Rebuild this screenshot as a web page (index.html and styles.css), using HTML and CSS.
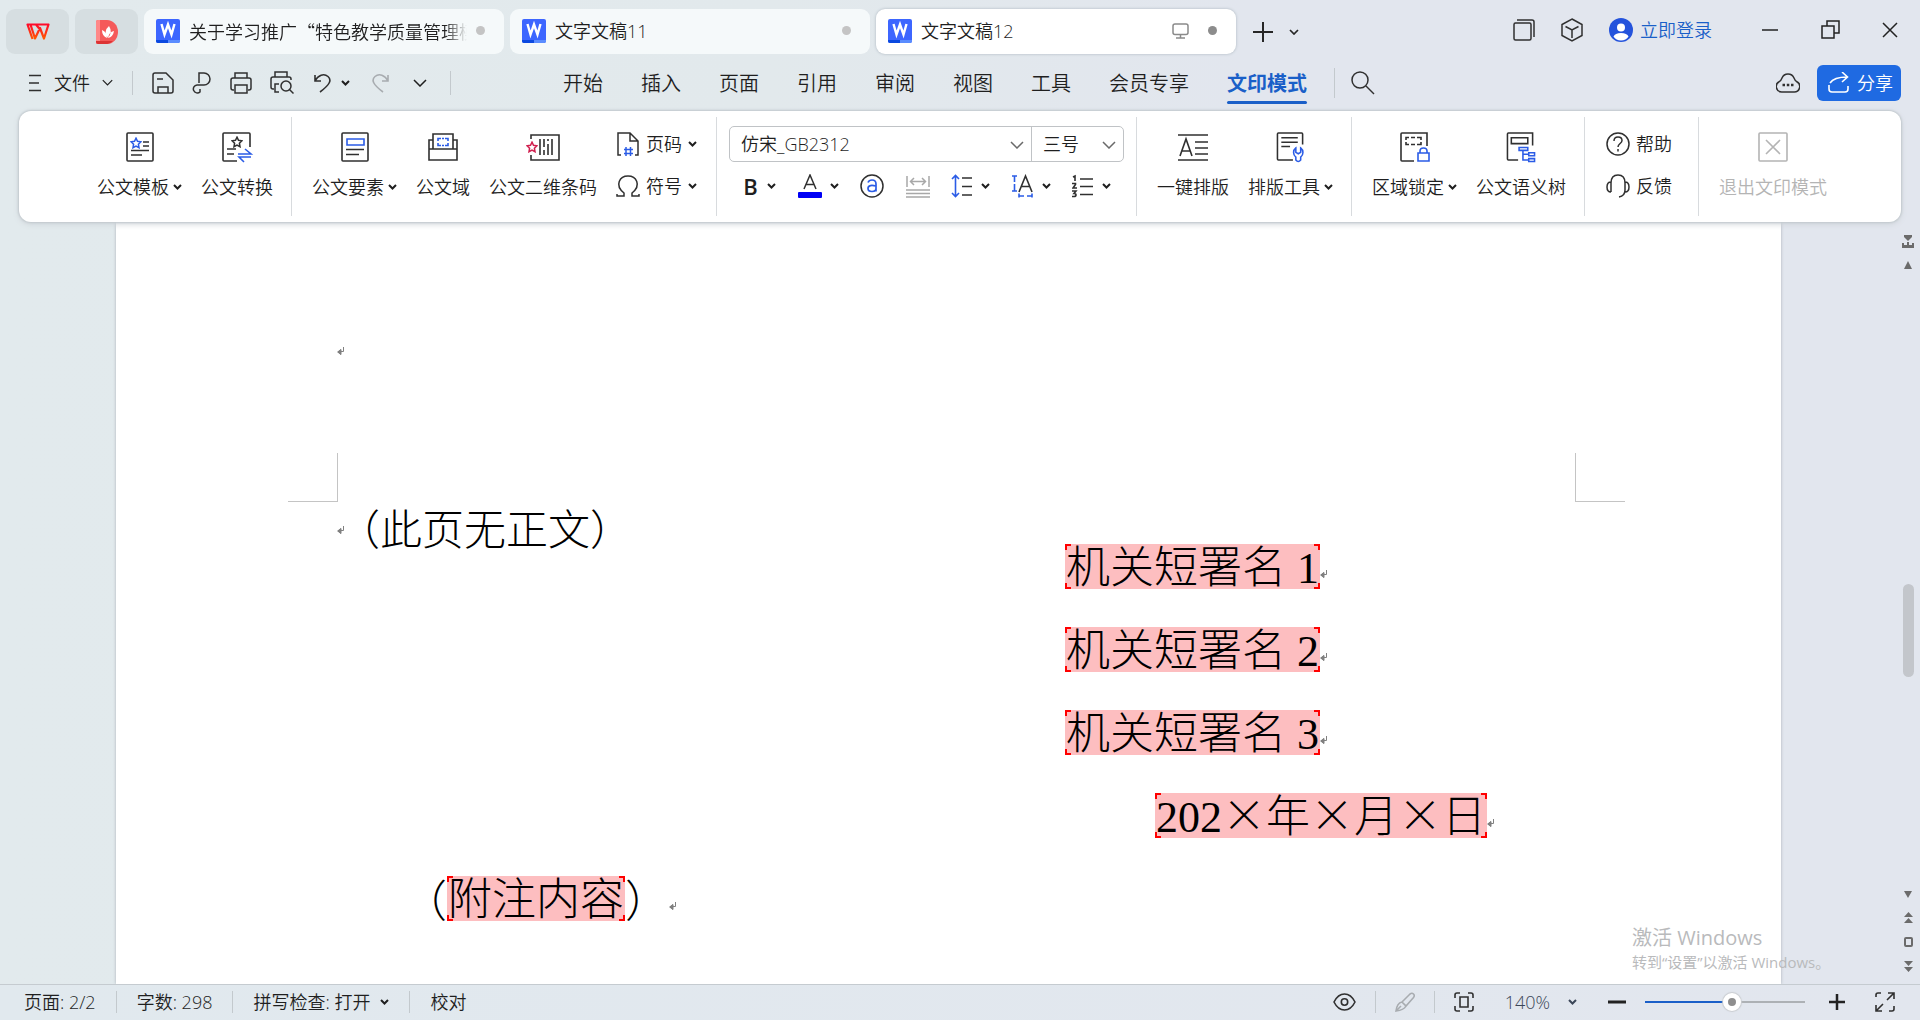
FILE: index.html
```html
<!DOCTYPE html>
<html lang="zh-CN">
<head>
<meta charset="utf-8">
<title>文字文稿12</title>
<link rel="stylesheet" href="styles.css">
</head>
<body>
<svg class="defs" aria-hidden="true">
  <symbol id="caret" viewBox="0 0 9 6"><path d="M1 1l3.500 3.500L8 1" fill="none" stroke="currentColor" stroke-width="2"/></symbol>
  <symbol id="chev" viewBox="0 0 14 8"><path d="M1 1l6 6 6-6" fill="none" stroke="currentColor" stroke-width="1.500"/></symbol>
  <symbol id="word" viewBox="0 0 24 24"><rect width="24" height="24" rx="2" fill="#3d66ff"/><path d="M0 21h12v3H2a2 2 0 0 1-2-2z" fill="#0b49e0"/><path d="M12 21h12v1a2 2 0 0 1-2 2H12z" fill="#5a8cff"/><path d="M5.500 5l3 10.500L12 5.500l3.500 10L18.500 5" fill="none" stroke="#fff" stroke-width="2.400"/></symbol>
  <symbol id="ret" viewBox="0 0 7 9"><path d="M6.500 0v4.500H3M4 2.500L1 5l3 2.500z" fill="none" stroke="#808080"/><path d="M4 2v6L0 5z" fill="#808080"/></symbol>
  <symbol id="star" viewBox="0 0 12 12"><path d="M6 1.200l1.500 3.100 3.400.5-2.500 2.400.6 3.500L6 9l-3 1.700.6-3.500L1.100 4.800l3.400-.5z" fill="none" stroke="currentColor" stroke-width="1.500"/></symbol>
</svg>

<header class="titlebar">
  <button class="home-tab" aria-label="首页"><svg width="24" height="20" viewBox="0 0 24 20"><defs><linearGradient id="wps" x2="0" y2="1"><stop stop-color="#ff0a2b"/><stop offset="1" stop-color="#ff5a00"/></linearGradient></defs><path d="M4.500 2.500L9 16.500 14 6l4 10.500 4.500-14H10l4 5M10 2.500H1.500L6.500 17" fill="none" stroke="url(#wps)" stroke-width="2.200" stroke-linejoin="round"/></svg></button>
  <button class="home-tab" aria-label="稻壳"><svg width="22" height="24" viewBox="0 0 22 24"><path d="M0 2a2 2 0 0 1 2-2h9a11 12 0 0 1 0 24H2a2 2 0 0 1-2-2z" fill="#f55a5a"/><path d="M0 2a2 2 0 0 1 2-2h2v24H2a2 2 0 0 1-2-2z" fill="#f88"/><path d="M0 21h17q-3 3-6 3H2a2 2 0 0 1-2-2z" fill="#dc3434"/><path d="M12 18q-5-7 1-12 4 6-1 12M11 18Q6 16 6 10q5 2 5 8M12 18q5-1 6-7-5 1-6 7" fill="#fff"/></svg></button>
  <button class="doc-tab"><svg width="24" height="24"><use href="#word"/></svg><span class="tab-name fade">关于学习推广“特色教学质量管理模</span><i class="dot"></i></button>
  <button class="doc-tab"><svg width="24" height="24"><use href="#word"/></svg><span class="tab-name">文字文稿11</span><i class="dot"></i></button>
  <button class="doc-tab active"><svg width="24" height="24"><use href="#word"/></svg><span class="tab-name">文字文稿12</span><svg width="17" height="16" viewBox="0 0 17 16" fill="none" stroke="#8a8a8a" stroke-width="1.500"><rect x="1" y="1" width="15" height="10.500" rx="2"/><path d="M8.500 12v2.500M4 15h9"/></svg><i class="dot"></i></button>
  <button class="new-tab" aria-label="新建"><svg width="22" height="22" viewBox="0 0 22 22"><path d="M11 1v20M1 11h20" stroke="#262626" stroke-width="2"/></svg></button>
  <button class="tab-list" aria-label="标签列表"><svg width="10" height="6" viewBox="0 0 10 6"><path d="M1 1l4 4 4-4" fill="none" stroke="#262626" stroke-width="1.700"/></svg></button>
  <nav class="window-tools">
    <button aria-label="窗口"><svg width="22" height="22" viewBox="0 0 22 22" fill="none" stroke="#303030" stroke-width="1.500"><rect x="1" y="4" width="17" height="17" rx="1.500"/><path d="M4 1h15a2 2 0 0 1 2 2v15"/></svg></button>
    <button aria-label="应用"><svg width="22" height="24" viewBox="0 0 22 24" fill="none" stroke="#303030" stroke-width="1.500"><path d="M11 1l10 5.500v11L11 23 1 17.500v-11zM4.500 8.500L11 12l6.500-3.500M11 12v8"/></svg></button>
    <a class="login" href="#"><svg width="24" height="24" viewBox="0 0 24 24"><circle cx="12" cy="12" r="12" fill="#2453dc"/><circle cx="12" cy="9.500" r="4" fill="#fff"/><path d="M4.500 18.500Q6 15 12 15t7.500 3.500Q17 22.500 12 22.500t-7.500-4" fill="#fff"/></svg>立即登录</a>
    <button class="minimize" aria-label="最小化"><svg width="16" height="16" viewBox="0 0 16 16"><path d="M0 8h16" stroke="#222" stroke-width="1.500"/></svg></button>
    <button class="restore" aria-label="还原"><svg width="19" height="19" viewBox="0 0 19 19" fill="none" stroke="#222" stroke-width="1.500"><path d="M1 6h12v12H1zM6 6V1h12v12h-5"/></svg></button>
    <button aria-label="关闭"><svg width="16" height="16" viewBox="0 0 16 16"><path d="M1 1l14 14M15 1L1 15" stroke="#222" stroke-width="1.500"/></svg></button>
  </nav>
</header>

<div class="menubar">
  <button class="file-menu"><svg width="14" height="18" viewBox="0 0 14 18"><path d="M1 1.500h12M1 9h10M1 16.500h12" stroke="#303030" stroke-width="1.500"/></svg><span>文件</span><svg width="11" height="7"><use href="#chev"/></svg></button>
  <i class="rule"></i>
  <div class="quick">
    <button aria-label="保存"><svg width="22" height="22" viewBox="0 0 22 22" fill="none" stroke="#303030" stroke-width="1.500"><path d="M3 1h11l7 7v11a2 2 0 0 1-2 2H3a2 2 0 0 1-2-2V3a2 2 0 0 1 2-2zM6 21v-6h10v6M5 7h6"/></svg></button>
    <button aria-label="输出"><svg width="20" height="22" viewBox="0 0 20 22" fill="none" stroke="#303030" stroke-width="1.500"><path d="M7 11V1h5a6 6 0 0 1 0 12H5a4 4 0 1 0 3 7v-3"/></svg></button>
    <button aria-label="打印"><svg width="22" height="22" viewBox="0 0 22 22" fill="none" stroke="#303030" stroke-width="1.500"><path d="M5 6V1h12v5M4 18H3a2 2 0 0 1-2-2V8a2 2 0 0 1 2-2h16a2 2 0 0 1 2 2v8a2 2 0 0 1-2 2h-1M5 13h12v8H5z"/></svg></button>
    <button aria-label="打印预览"><svg width="24" height="23" viewBox="0 0 24 23" fill="none" stroke="#303030" stroke-width="1.500"><path d="M5 6V1h12v5M4 18H3a2 2 0 0 1-2-2V8a2 2 0 0 1 2-2h16a2 2 0 0 1 2 2v1M9 21H5v-8h4"/><circle cx="16" cy="15" r="5"/><path d="M19.500 18.500l4 4"/></svg></button>
    <button class="undo" aria-label="撤销"><svg width="17" height="20" viewBox="0 0 17 20" fill="none" stroke="#303030" stroke-width="1.600"><path d="M1 2v6h6M1 8C4 2 10 0 14 3.500s2 8-8 15.500"/></svg><svg width="9" height="6"><use href="#caret"/></svg></button>
    <button class="off" aria-label="恢复"><svg width="17" height="20" viewBox="0 0 17 20" fill="none" stroke="currentColor" stroke-width="1.600"><path d="M16 2v6h-6M16 8C13 2 7 0 3 3.500s-2 8 8 15.500"/></svg></button>
    <button aria-label="更多"><svg width="14" height="8"><use href="#chev"/></svg></button>
  </div>
  <i class="rule"></i>
  <nav class="menus">
    <a href="#">开始</a><a href="#">插入</a><a href="#">页面</a><a href="#">引用</a><a href="#">审阅</a><a href="#">视图</a><a href="#">工具</a><a href="#">会员专享</a><a href="#" class="current">文印模式</a>
  </nav>
  <i class="rule tall"></i>
  <button class="search" aria-label="搜索"><svg width="24" height="24" viewBox="0 0 24 24" fill="none" stroke="#303030" stroke-width="1.500"><circle cx="9" cy="9" r="8"/><path d="M15 15l8 8"/></svg></button>
  <button class="cloud" aria-label="云文档"><svg width="24" height="21" viewBox="0 0 24 21" fill="none" stroke="#303030" stroke-width="1.500"><path d="M6 20a5.500 5.500 0 0 1-2.500-10.500Q5 8.500 6 6a6.500 6.500 0 0 1 12 0q1 2.500 2.500 3.500A5.500 5.500 0 0 1 18 20z"/><path d="M6.500 13h2.500M10.800 13h2.500M15 13h2.500" stroke-width="2.500"/></svg></button>
  <button class="share"><svg width="22" height="21" viewBox="0 0 22 21" fill="none" stroke="#fff" stroke-width="1.600"><path d="M1 13v4a3 3 0 0 0 3 3h13a3 3 0 0 0 3-3v-3M2 11Q6 5 19 5M14 0l5.500 5-5.500 5"/></svg>分享</button>
</div>

<section class="ribbon" aria-label="文印模式">
  <div class="group">
    <button class="tool"><svg width="28" height="30" viewBox="0 0 28 30" fill="none" stroke="#303030" stroke-width="1.600"><rect x="1" y="1" width="26" height="28" rx="1"/><path d="M17 10h6M17 14h6M5 18.500h18M5 23h11"/><use href="#star" x="4" y="5" width="12" height="12" color="#2b5ce6"/></svg><span>公文模板<svg width="9" height="6"><use href="#caret"/></svg></span></button>
    <button class="tool"><svg width="30" height="30" viewBox="0 0 30 30" fill="none" stroke="#303030" stroke-width="1.600"><path d="M15 29H2a1 1 0 0 1-1-1V2a1 1 0 0 1 1-1h25a1 1 0 0 1 1 1v13M5 17h9M5 22h7"/><use href="#star" x="9" y="4" width="12" height="12" color="#303030"/><path d="M16 22h13l-6-5M29 25H17l5 5" stroke="#2b5ce6"/></svg><span>公文转换</span></button>
  </div>
  <div class="group">
    <button class="tool"><svg width="28" height="30" viewBox="0 0 28 30" fill="none" stroke="#303030" stroke-width="1.600"><rect x="1" y="1" width="26" height="28" rx="1"/><path d="M5 17.500h18M5 22.500h13"/><path d="M6 7h17v6H6z" stroke="#2b5ce6"/></svg><span>公文要素<svg width="9" height="6"><use href="#caret"/></svg></span></button>
    <button class="tool"><svg width="30" height="30" viewBox="0 0 30 30" fill="none" stroke="#303030" stroke-width="1.600"><path d="M1 17h28v11H1zM5 17V2h20v15M5 8H1v9M25 8h4v9"/><path d="M10 9V6.500h3M17 6.500h3V9M20 11v2.500h-3M13 13.500h-3V11M14 6.500h2M14 13.500h2" stroke="#2b5ce6"/></svg><span>公文域</span></button>
    <button class="tool"><svg width="34" height="30" viewBox="0 0 34 30" fill="none" stroke="#303030" stroke-width="1.600"><path d="M5 7V3h28v25H5v-5M14 7v16M18 7v8M18 18v5M22 7v2M22 12v11M26 7v16"/><use href="#star" x="0" y="9" width="12" height="12" color="#d0204f"/></svg><span>公文二维条码</span></button>
    <div class="stack">
      <button class="mini"><svg width="24" height="24" viewBox="0 0 24 24" fill="none" stroke="#303030" stroke-width="1.500"><path d="M5 23H2V1h12l8 8v14h-3M14 1v8h8"/><path d="M10 15v9M14.500 15v9M8 17.500h9M8 21.500h9" stroke="#2b5ce6"/></svg>页码<svg width="9" height="6"><use href="#caret"/></svg></button>
      <button class="mini"><svg width="24" height="24" viewBox="0 0 24 24" fill="none" stroke="#303030" stroke-width="1.500"><path d="M1 20v2h7v-3C-2 11 4 2 12 2s14 9 4 17v3h7v-2"/></svg>符号<svg width="9" height="6"><use href="#caret"/></svg></button>
    </div>
  </div>
  <div class="group font-group">
    <div class="combo">
      <label class="pick family"><select aria-label="字体"><option>仿宋_GB2312</option></select><svg width="14" height="8"><use href="#chev"/></svg></label>
      <label class="pick size"><select aria-label="字号"><option>三号</option></select><svg width="14" height="8"><use href="#chev"/></svg></label>
    </div>
    <div class="format">
      <button aria-label="加粗"><b>B</b><svg width="9" height="6"><use href="#caret"/></svg></button>
      <button aria-label="字体颜色"><svg width="24" height="24" viewBox="0 0 24 24"><path d="M6 15L12 1l6 14M8 10.500h8" fill="none" stroke="#303030" stroke-width="1.500"/><rect y="18" width="24" height="6" rx="1" fill="#0000f5"/></svg><svg width="9" height="6"><use href="#caret"/></svg></button>
      <button aria-label="带圈字符"><svg width="24" height="24" viewBox="0 0 24 24" fill="none"><circle cx="12" cy="12" r="11" stroke="#303030" stroke-width="1.500"/><path d="M8 8.500q1-2.500 4-2.500 4 0 4 4v7.500M16 12c-4-1-8-1-8 2.500 0 4 8 4 8 0" stroke="#2b5ce6" stroke-width="1.700"/></svg></button>
      <button class="off" aria-label="字符宽度"><svg width="24" height="24" viewBox="0 0 24 24" fill="none" stroke="#a8a8a8" stroke-width="1.500"><path d="M1 2v11M23 2v11M5 7.500h14M8 4L4.500 7.500 8 11M16 4l3.500 3.500L16 11M0 16h24M0 19.500h24M0 23h24"/></svg></button>
      <button aria-label="行距"><svg width="22" height="24" viewBox="0 0 22 24" fill="none" stroke="#303030" stroke-width="1.600"><path d="M11 4h10M11 12.500h10M11 21h10"/><path d="M4.500 2v20M1 5l3.500-3.500L8 5M1 19l3.500 3.500L8 19" stroke="#2b5ce6"/></svg><svg width="9" height="6"><use href="#caret"/></svg></button>
      <button aria-label="字符缩放"><svg width="22" height="24" viewBox="0 0 22 24" fill="none" stroke="#303030" stroke-width="1.600"><path d="M7 18l6.500-16L20 18M9.500 12.500h8"/><path d="M0 2h5M0 17h5M2.500 2v6M2.500 10v7M7 22h5M15 22h5M7 19.500v4M20 19.500v4" stroke="#2b5ce6"/></svg><svg width="9" height="6"><use href="#caret"/></svg></button>
      <button aria-label="编号"><svg width="22" height="24" viewBox="0 0 22 24" fill="none" stroke="#303030" stroke-width="1.600"><path d="M8 5h13M8 12.500h13M8 20.500h13M1 3l2-1v5M0 9.500h3.500v1L1 14h4M0 17h4l-2 2.500q2 0 2 1.500t-2 1.500H0"/></svg><svg width="9" height="6"><use href="#caret"/></svg></button>
    </div>
  </div>
  <div class="group">
    <button class="tool"><svg width="30" height="30" viewBox="0 0 30 30" fill="none" stroke="#303030" stroke-width="1.600"><path d="M0 3h30M0 28h30M17 10h13M17 16h13M17 22h13M2 24L8 7l6 17M4 19h8"/></svg><span>一键排版</span></button>
    <button class="tool"><svg width="30" height="31" viewBox="0 0 30 31" fill="none" stroke="#303030" stroke-width="1.600"><path d="M17 29H2a1 1 0 0 1-1-1V2a1 1 0 0 1 1-1h24a1 1 0 0 1 1 1v11M5 6h17M5 10.500h17M5 15h9"/><path d="M20 16.500a6 6 0 0 0 0 9.500v3q2.500 3 5 0v-3a6 6 0 0 0 0-9.500v4.500l-2.500 1.500-2.500-1.500z" stroke="#2b5ce6"/></svg><span>排版工具<svg width="9" height="6"><use href="#caret"/></svg></span></button>
  </div>
  <div class="group">
    <button class="tool"><svg width="30" height="30" viewBox="0 0 30 30" fill="none" stroke="#303030" stroke-width="1.600"><path d="M14 29H2a1 1 0 0 1-1-1V2a1 1 0 0 1 1-1h25v13M6 8V5.500h3M11 5.500h4M17 5.500h4V8M21 10v2.500h-4M15 12.500h-4M9 12.500H6V10"/><path d="M18 21h11v8H18zM20 21v-2q0-3 3.500-3t3.500 3v2" stroke="#2b5ce6"/></svg><span>区域锁定<svg width="9" height="6"><use href="#caret"/></svg></span></button>
    <button class="tool"><svg width="30" height="31" viewBox="0 0 30 31" fill="none" stroke="#303030" stroke-width="1.600"><path d="M12 29H2a1 1 0 0 1-1-1V2a1 1 0 0 1 1-1h25v13M5 6h17v6H5z"/><path d="M13 16h9v3h-9zM23 21.500h6v3h-6zM23 27.500h6v3h-6zM17 19v10h6M17 23h6" stroke="#2b5ce6"/></svg><span>公文语义树</span></button>
  </div>
  <div class="group help-group">
    <div class="stack">
      <button class="mini"><svg width="24" height="24" viewBox="0 0 24 24" fill="none" stroke="#303030" stroke-width="1.500"><circle cx="12" cy="12" r="11"/><path d="M8 9q0-4 4-4t4 3.500c0 3-4 3-4 6.500M12 17v2.500"/></svg>帮助</button>
      <button class="mini"><svg width="24" height="24" viewBox="0 0 24 24" fill="none" stroke="#303030" stroke-width="1.500"><path d="M5 18V9q0-8 7-8t7 8v7q0 6-6 7M5 8q-4 0-4 5t4 5M19 8q4 0 4 5t-4 5"/></svg>反馈</button>
    </div>
  </div>
  <div class="group last">
    <button class="tool" disabled><svg width="30" height="30" viewBox="0 0 30 30" fill="none" stroke="currentColor" stroke-width="1.600"><rect x="1" y="1" width="28" height="28" rx="1"/><path d="M8 8l14 14M22 8L8 22"/></svg><span>退出文印模式</span></button>
  </div>
</section>

<main class="workspace">
  <article class="paper">
    <p class="header-line"><svg width="7" height="9"><use href="#ret"/></svg></p>
    <div class="corners"><i class="corner left"></i><i class="corner right"></i></div>
    <p class="blank-note"><svg width="7" height="9"><use href="#ret"/></svg><span>（此页无正文）</span></p>
    <div class="signatures">
      <p class="sign"><mark>机关短署名<span class="num"> 1</span></mark><svg width="7" height="9"><use href="#ret"/></svg></p>
      <p class="sign"><mark>机关短署名<span class="num"> 2</span></mark><svg width="7" height="9"><use href="#ret"/></svg></p>
      <p class="sign"><mark>机关短署名<span class="num"> 3</span></mark><svg width="7" height="9"><use href="#ret"/></svg></p>
      <p class="sign date"><mark><span class="num">202</span>×年×月×日</mark><svg width="7" height="9"><use href="#ret"/></svg></p>
      <p class="sign note"><span>（</span><mark>附注内容</mark><span>）</span><svg width="7" height="9"><use href="#ret"/></svg></p>
    </div>
  </article>
  <aside class="scrollbar">
    <div class="scroll-end">
      <svg width="12" height="13" viewBox="0 0 12 13" fill="#6b6b6b"><path d="M2 0h8v2L6 6 2 2zM0 8h2v2h3V7h2v3h3V8h2v5H0z"/></svg>
      <svg width="8" height="8" viewBox="0 0 8 8" fill="#6b6b6b"><path d="M4 0l4 8H0z"/></svg>
    </div>
    <div class="thumb"></div>
    <div class="scroll-end bottom">
      <svg width="8" height="7" viewBox="0 0 8 7" fill="#6b6b6b"><path d="M0 0h8L4 7z"/></svg>
      <svg width="9" height="11" viewBox="0 0 9 11" fill="#6b6b6b"><path d="M4.500 0L9 5H0zM4.500 6L9 11H0z"/></svg>
      <svg width="9" height="10" viewBox="0 0 9 10" fill="none" stroke="#6b6b6b" stroke-width="2"><rect x="1" y="1" width="7" height="8" rx="1"/></svg>
      <svg width="9" height="11" viewBox="0 0 9 11" fill="#6b6b6b"><path d="M0 0h9L4.500 5zM0 6h9l-4.500 5z"/></svg>
    </div>
  </aside>
  <div class="activate"><strong>激活 Windows</strong><span>转到<q>设置</q>以激活 Windows。</span></div>
</main>

<footer class="statusbar">
  <span>页面: 2/2</span><i class="rule"></i>
  <span>字数: 298</span><i class="rule"></i>
  <button class="spell">拼写检查: 打开<svg width="9" height="6"><use href="#caret"/></svg></button><i class="rule"></i>
  <button>校对</button>
  <div class="view-tools">
    <button aria-label="护眼"><svg width="23" height="18" viewBox="0 0 23 18" fill="none" stroke="#303030" stroke-width="1.600"><path d="M1 9q4-8 10.500-8T22 9q-4 8-10.500 8T1 9z"/><circle cx="11.500" cy="9" r="3.200"/></svg></button>
    <i class="rule"></i>
    <button class="off" aria-label="画笔"><svg width="20" height="20" viewBox="0 0 20 20" fill="none" stroke="currentColor" stroke-width="1.600"><path d="M7 10l8-8q2-1.500 3.500 0t0 3.500L11 14zM7 10q-5 1-6 9 8-1 10-5zM1 19l5-5"/></svg></button>
    <i class="rule"></i>
    <button aria-label="适应页面"><svg width="20" height="20" viewBox="0 0 20 20" fill="none" stroke="#303030" stroke-width="1.600"><path d="M1 6V3a2 2 0 0 1 2-2h3M14 1h3a2 2 0 0 1 2 2v3M19 14v3a2 2 0 0 1-2 2h-3M6 19H3a2 2 0 0 1-2-2v-3M6 5h8v10H6z"/></svg></button>
    <button class="zoom">140%<svg width="9" height="6"><use href="#caret"/></svg></button>
    <button class="minus" aria-label="缩小"><svg width="18" height="4" viewBox="0 0 18 4"><path d="M0 2h18" stroke="#222" stroke-width="3"/></svg></button>
    <input class="slider" type="range" min="0" max="100" value="55" aria-label="显示比例">
    <button class="plus" aria-label="放大"><svg width="16" height="16" viewBox="0 0 16 16"><path d="M0 8h16M8 0v16" stroke="#222" stroke-width="2.500"/></svg></button>
    <button aria-label="全屏"><svg width="20" height="20" viewBox="0 0 20 20" fill="none" stroke="#303030" stroke-width="1.600"><path d="M1 5V3a2 2 0 0 1 2-2h3M13 1h6v6M19 1l-7 7M19 14v3a2 2 0 0 1-2 2h-3M7 19H1v-6M1 19l7-7"/></svg></button>
  </div>
</footer>
</body>
</html>
```
FILE: styles.css
```css
* { box-sizing: border-box; }

body {
  margin: 0;
  height: 100vh;
  display: flex;
  flex-direction: column;
  overflow: hidden;
  background: linear-gradient(to right, #e2eaed 0%, #e2e9ec 40%, #e2e6ee 65%, #e2e6ee 100%);
  color: #1f1f1f;
  font: 18px/24px "Open Sans", "Noto Sans CJK SC", sans-serif;
  font-weight: 350;
}

button, select, input { font: inherit; color: inherit; }
button { display: flex; align-items: center; padding: 0; border: 0; background: none; white-space: nowrap; }
a { color: inherit; text-decoration: none; }
p { margin: 0; }
svg { flex: none; display: block; }
.defs { position: absolute; width: 0; height: 0; }
.off { color: #a8acb0; }
.rule { flex: none; width: 1px; height: 24px; background: #c3c9cd; }

/* title bar */
.titlebar { display: flex; align-items: center; gap: 6px; height: 54px; padding: 9px 22px 0 6px; flex: none; }
.home-tab { width: 63px; height: 45px; justify-content: center; border-radius: 9px; background: #d6dee1; }
.doc-tab { flex: 0 1 360px; min-width: 0; height: 45px; padding: 0 19px 2px 12px; gap: 9px; border-radius: 9px; background: #f5f9fa; }
.doc-tab.active { background: #fff; box-shadow: 0 0 3px #a9b4bd; }
.tab-name { flex: 1; min-width: 0; overflow: hidden; text-align: left; }
.fade { font-family: "Noto Sans CJK SC", sans-serif; mask-image: linear-gradient(to right, #000 92%, transparent); }
.dot { flex: none; width: 9px; height: 9px; border-radius: 50%; background: #c4c4c4; }
.active .dot { margin-left: 10px; background: #8c8c8c; }
.new-tab { margin-left: 10px; }
.tab-list { margin-left: 9px; }
.window-tools { display: flex; align-items: center; gap: 26px; height: 42px; margin: -4px 0 0 auto; }
.login { display: flex; align-items: center; gap: 7px; color: #1a5fc8; }
.minimize { margin-left: 24px; }
.restore { margin: 0 16px 0 17px; }

/* menu bar */
.menubar { display: flex; align-items: center; flex: none; height: 57px; padding: 0 19px 0 28px; }
.file-menu { gap: 12px; margin-right: 19px; }
.quick { display: flex; align-items: center; gap: 18px; margin: 0 23px 0 19px; }
.undo { gap: 10px; margin-left: 2px; }
.quick .off { margin: 0 6px 0 4px; }
.menus { display: flex; gap: 38px; margin: 2px 27px 0 112px; font-size: 20px; }
.menus a { position: relative; line-height: 36px; }
.current { color: #1a5fc8; font-weight: 700; }
.current::after { content: ""; position: absolute; left: 0; right: 0; bottom: -2px; height: 3px; border-radius: 2px; background: #1a5fc8; }
.tall { height: 30px; }
.search { margin-left: 16px; }
.cloud { margin-left: auto; }
.share { gap: 7px; height: 36px; margin-left: 17px; padding: 0 8px 0 11px; border-radius: 6px; background: #1f6ae2; color: #fff; }

/* ribbon */
.ribbon { position: relative; z-index: 1; display: flex; flex: none; height: 111px; margin: 0 19px; padding: 6px 0 6px 58px; border-radius: 12px; background: #fff; box-shadow: 0 0 2px 1px #c2c9ce, 0 2px 6px #cdd3d8; }
.group { display: flex; align-items: flex-start; gap: 19px; padding: 0 18px 0 20px; border-right: 1px solid #d8dbde; }
.group.last { border: 0; }
.tool { flex-direction: column; gap: 13px; padding-top: 15px; }
.tool > svg { height: 30px; overflow: visible; }
.tool span { display: flex; align-items: center; gap: 4px; }
.tool:disabled { color: #b4b4b4; }
.stack { display: flex; flex-direction: column; gap: 18px; padding-top: 15px; }
.mini { gap: 6px; }
.stack .mini:first-child:not(:only-child) { padding-right: 1px; }
.help-group { padding: 0 25px 0 21px; }
.font-group { flex-direction: column; align-items: stretch; gap: 12px; padding: 9px 12px 0 12px; }
.combo { display: flex; height: 36px; border: 1px solid #c0c3c6; border-radius: 5px; }
.pick { position: relative; }
.pick svg { position: absolute; right: 7px; top: 14px; color: #6a6a6a; pointer-events: none; }
.pick select { width: 100%; height: 34px; padding: 0 11px; border: 0; background: none; appearance: none; color: #1f1f1f; }
.family { width: 301px; }
.size { width: 92px; border-left: 1px solid #c0c3c6; }
.format { display: flex; justify-content: space-between; padding: 0 13px; }
.format button { gap: 8px; height: 24px; }
.format b { width: 17px; font-size: 22px; font-weight: 600; }

/* document */
.workspace { position: relative; flex: 1; min-height: 0; display: flex; padding-left: 116px; overflow: hidden; }
.paper { flex: 1; background: #fff; box-shadow: 0 0 3px #aab1b8; font-size: 44px; color: #000; font-family: "Noto Sans CJK SC", sans-serif; font-weight: 300; }
.header-line { padding: 125px 0 0 221px; }
.corners { display: flex; justify-content: space-between; margin-top: 97px; padding: 0 156px 0 172px; }
.corner { width: 50px; height: 49px; border: 0 solid #c4c4c4; border-bottom-width: 1px; }
.corner.left { border-right-width: 1px; }
.corner.right { border-left-width: 1px; }
.blank-note { position: relative; height: 30px; margin-top: 12px; padding-left: 222px; font-size: 42px; line-height: 26px; }
.blank-note svg { position: absolute; left: 221px; top: 12px; }
.signatures { display: flex; flex-direction: column; gap: 38px; }
.sign { display: flex; align-items: center; height: 45px; padding-left: 949px; line-height: 41px; white-space: pre; }
.sign svg { margin-top: 15px; }
.sign mark {
  padding: 0 1px;
  height: 45px;
  color: #000;
  background:
    linear-gradient(red, red) 0 0 / 6px 2px, linear-gradient(red, red) 0 0 / 2px 6px,
    linear-gradient(red, red) 100% 0 / 6px 2px, linear-gradient(red, red) 100% 0 / 2px 6px,
    linear-gradient(red, red) 0 100% / 6px 2px, linear-gradient(red, red) 0 100% / 2px 6px,
    linear-gradient(red, red) 100% 100% / 6px 2px, linear-gradient(red, red) 100% 100% / 2px 6px,
    #fdbec0;
  background-repeat: no-repeat;
}
.num { font-family: "Liberation Serif", serif; }
.date { padding-left: 1039px; }
.note { padding-left: 287px; }

.scrollbar { display: flex; flex-direction: column; align-items: center; width: 139px; padding: 13px 0 12px 115px; }
.scroll-end { display: flex; flex-direction: column; align-items: center; gap: 13px; }
.bottom { gap: 14px; }
.thumb { width: 11px; height: 93px; margin: 315px 0 auto; border-radius: 6px; background: #c3c6cb; }
.activate { position: absolute; left: 85%; bottom: 10px; display: flex; flex-direction: column; color: #b9babc; font-size: 15px; font-weight: 400; white-space: nowrap; }
.activate strong { font-size: 20px; font-weight: 400; }
.activate q { quotes: "“" "”"; }

/* status bar */
.statusbar { display: flex; align-items: center; flex: none; gap: 20px; height: 36px; padding: 0 25px 2px 24px; border-top: 1px solid #c5cbd0; background: linear-gradient(to right, #e1e9ee, #e2e6ee); }
.spell { gap: 10px; }
.view-tools { display: flex; align-items: center; gap: 19px; margin-left: auto; }
.statusbar .rule { height: 22px; }
.zoom { gap: 18px; margin: 0 12px; color: #3b4658; }
.plus { margin: 0 11px 0 5px; }
.slider { width: 160px; height: 18px; margin: 0; appearance: none; background: linear-gradient(to right, #1a5fc8 55%, #adb1b5 55%) center / 100% 2px no-repeat; }
.slider::-webkit-slider-thumb { appearance: none; width: 18px; height: 18px; border: 5px solid #fff; border-radius: 50%; background: #8e8e8e; box-shadow: 0 0 1px 1px #c9ccd0; }
```
